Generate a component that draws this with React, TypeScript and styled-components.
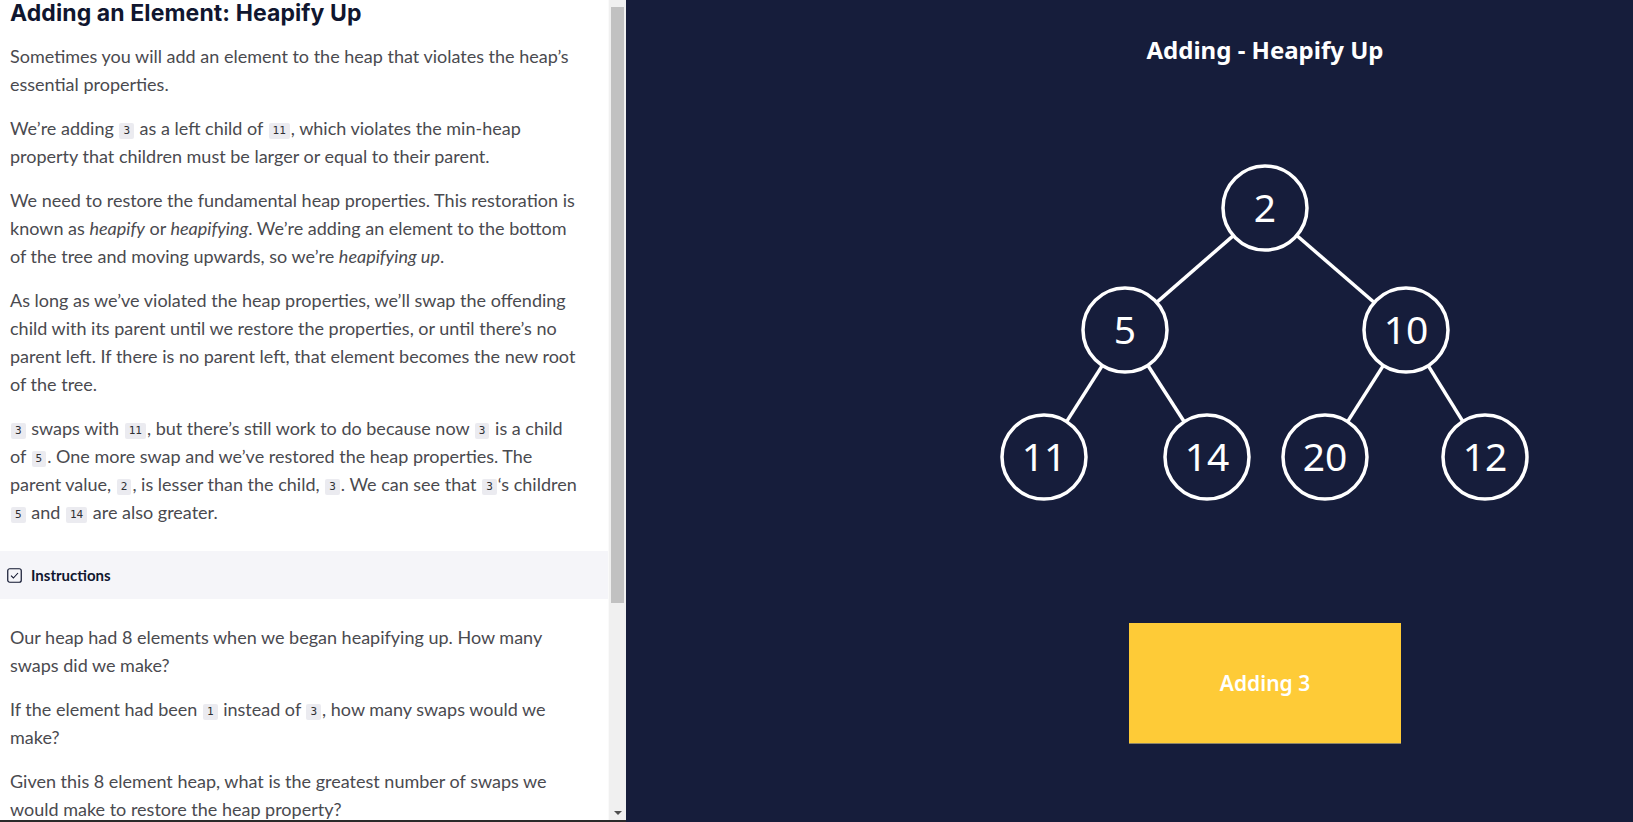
import styled, { createGlobalStyle } from "styled-components";

const GlobalStyle = createGlobalStyle`
  html, body {
    margin: 0;
    padding: 0;
    height: 100%;
    overflow: hidden;
  }
  * {
    box-sizing: border-box;
  }
`;

type HeapNode = { id: string; label: string; x: number; y: number };

const NODE_R = 42;

const nodes: HeapNode[] = [
  { id: "a", label: "2", x: 280, y: 58 },
  { id: "b", label: "5", x: 140, y: 180 },
  { id: "c", label: "10", x: 421, y: 180 },
  { id: "d", label: "11", x: 59, y: 307 },
  { id: "e", label: "14", x: 222, y: 307 },
  { id: "f", label: "20", x: 340, y: 307 },
  { id: "g", label: "12", x: 500, y: 307 },
];

const edges: [string, string][] = [
  ["a", "b"],
  ["a", "c"],
  ["b", "d"],
  ["b", "e"],
  ["c", "f"],
  ["c", "g"],
];

const byId = (id: string) => nodes.find((n) => n.id === id)!;

// trim a line so it starts and ends on the circle outlines
const edgePoints = (from: HeapNode, to: HeapNode) => {
  const dx = to.x - from.x;
  const dy = to.y - from.y;
  const len = Math.sqrt(dx * dx + dy * dy);
  const ux = dx / len;
  const uy = dy / len;
  return {
    x1: from.x + ux * NODE_R,
    y1: from.y + uy * NODE_R,
    x2: to.x - ux * NODE_R,
    y2: to.y - uy * NODE_R,
  };
};

const HeapTree = () => (
  <TreeSvg width={560} height={360} viewBox="0 0 560 360">
    {edges.map(([p, c]) => {
      const pts = edgePoints(byId(p), byId(c));
      return <line key={p + c} {...pts} stroke="#fff" strokeWidth={3.5} />;
    })}
    {nodes.map((n) => (
      <g key={n.id}>
        <circle cx={n.x} cy={n.y} r={NODE_R} fill="none" stroke="#fff" strokeWidth={3.5} />
        <NodeLabel x={n.x} y={n.y + 14} textAnchor="middle">
          {n.label}
        </NodeLabel>
      </g>
    ))}
  </TreeSvg>
);

const CheckIcon = () => (
  <svg width="15" height="15" viewBox="0 0 15 15">
    <rect x="0.75" y="0.75" width="13.5" height="13.5" rx="2" fill="none" stroke="#10162f" strokeWidth="1.2" />
    <path d="M4 7.6 L6.4 10 L11 5" fill="none" stroke="#10162f" strokeWidth="1.1" />
  </svg>
);

export default function App() {
  return (
    <>
      <GlobalStyle />
      <Page>
        <LeftPane>
          <Content>
            <Section>
              <Heading>Adding an Element: Heapify Up</Heading>
              <P>Sometimes you will add an element to the heap that violates the heap’s essential properties.</P>
              <P>
                We’re adding <Code>3</Code> as a left child of <Code>11</Code>, which violates the min-heap property
                that children must be larger or equal to their parent.
              </P>
              <P>
                We need to restore the fundamental heap properties. This restoration is known as <em>heapify</em> or{" "}
                <em>heapifying</em>. We’re adding an element to the bottom of the tree and moving upwards, so we’re{" "}
                <em>heapifying up</em>.
              </P>
              <P>
                As long as we’ve violated the heap properties, we’ll swap the offending child with its parent until we
                restore the properties, or until there’s no parent left. If there is no parent left, that element
                becomes the new root of the tree.
              </P>
              <P>
                <Code>3</Code> swaps with <Code>11</Code>, but there’s still work to do because now <Code>3</Code> is a
                child of <Code>5</Code>. One more swap and we’ve restored the heap properties. The parent value,{" "}
                <Code>2</Code>, is lesser than the child, <Code>3</Code>. We can see that <Code>3</Code>‘s children{" "}
                <Code>5</Code> and <Code>14</Code> are also greater.
              </P>
            </Section>
            <InstructionsBar>
              <CheckIcon />
              <BarTitle>Instructions</BarTitle>
            </InstructionsBar>
            <Section $top={24}>
              <P>Our heap had 8 elements when we began heapifying up. How many swaps did we make?</P>
              <P>
                If the element had been <Code>1</Code> instead of <Code>3</Code>, how many swaps would we make?
              </P>
              <P>Given this 8 element heap, what is the greatest number of swaps we would make to restore the heap property?</P>
            </Section>
          </Content>
          <ScrollTrack>
            <ScrollThumb />
            <ScrollArrow />
          </ScrollTrack>
        </LeftPane>
        <RightPane>
          <Stage>
            <StageTitle>Adding - Heapify Up</StageTitle>
            <HeapTree />
            <StepButton>Adding 3</StepButton>
          </Stage>
        </RightPane>
      </Page>
    </>
  );
}

const Page = styled.div`
  display: flex;
  width: 100vw;
  height: 100vh;
  overflow: hidden;
`;

const LeftPane = styled.div`
  width: 626px;
  flex-shrink: 0;
  display: flex;
  background: #fff;
  border-bottom: 2px solid #2a2a2a;
`;

const Content = styled.div`
  flex: 1;
  overflow: hidden;
  border-right: 1px solid #fafafa;
`;

const Section = styled.div<{ $top?: number }>`
  padding: ${(p) => p.$top ?? 0}px 28px 0 10px;
`;

const Heading = styled.h1`
  margin: 0 0 16px;
  font-family: Inter, "Noto Sans", sans-serif;
  font-size: 23px;
  font-weight: 700;
  line-height: 26px;
  color: #10162f;
  letter-spacing: 0.1px;
`;

const P = styled.p`
  margin: 0 0 16px;
  font-family: Lato, "Open Sans", sans-serif;
  font-size: 18px;
  line-height: 28px;
  color: #4a4a4f;

  em {
    font-style: italic;
  }
`;

const Code = styled.code`
  display: inline-block;
  font-family: "DejaVu Sans Mono", "Liberation Mono", monospace;
  font-size: 11px;
  line-height: 16px;
  padding: 0 4px;
  margin: 0 1px;
  border-radius: 2px;
  background: #ebebf0;
  color: #2f2f33;
  vertical-align: 1px;
`;

const InstructionsBar = styled.div`
  display: flex;
  align-items: center;
  gap: 9px;
  height: 48px;
  margin-top: 25px;
  padding-left: 7px;
  background: #f5f5f9;
`;

const BarTitle = styled.span`
  font-family: Lato, "Open Sans", sans-serif;
  font-size: 15px;
  font-weight: 700;
  color: #10162f;
`;

const ScrollTrack = styled.div`
  width: 17px;
  flex-shrink: 0;
  display: flex;
  flex-direction: column;
  align-items: center;
  background: #f0f0f0;
  padding-top: 7px;
`;

const ScrollThumb = styled.div`
  width: 13px;
  height: 596px;
  background: #c1c1c1;
`;

const ScrollArrow = styled.div`
  margin-top: auto;
  margin-bottom: 5px;
  width: 0;
  height: 0;
  border-left: 4px solid transparent;
  border-right: 4px solid transparent;
  border-top: 4px solid #505050;
`;

const RightPane = styled.div`
  flex: 1;
  display: flex;
  justify-content: center;
  padding-left: 271px;
  background: #161d3b;
`;

const Stage = styled.div`
  display: flex;
  flex-direction: column;
  align-items: center;
  width: 560px;
`;

const StageTitle = styled.h2`
  margin: 34px 0 84px;
  font-family: "Noto Sans", "Open Sans", sans-serif;
  font-size: 24px;
  font-weight: 700;
  line-height: 32px;
  color: #fff;
`;

const TreeSvg = styled.svg`
  display: block;
`;

const NodeLabel = styled.text`
  font-family: "Noto Sans", "Open Sans", sans-serif;
  font-size: 39px;
  fill: #fff;
`;

const StepButton = styled.div`
  margin-top: 113px;
  width: 272px;
  height: 121px;
  display: flex;
  align-items: center;
  justify-content: center;
  background: #fecb37;
  border-bottom: 1px solid #8c8468;
  font-family: "Noto Sans", "Open Sans", sans-serif;
  font-size: 21px;
  font-weight: 600;
  color: #fff;
`;
